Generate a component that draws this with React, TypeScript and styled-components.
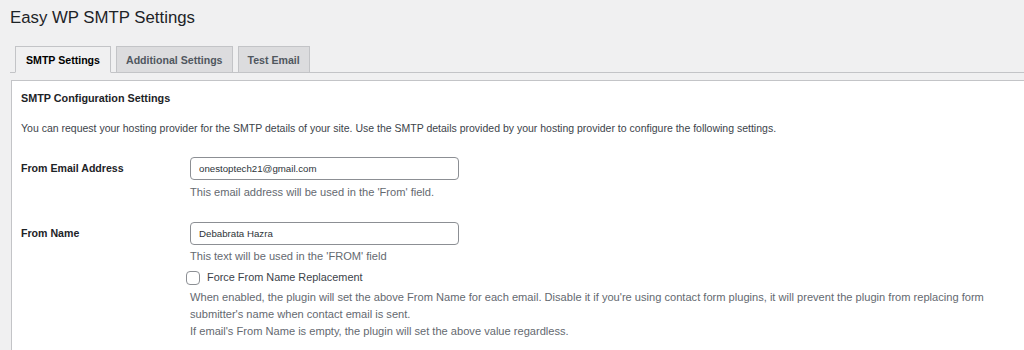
import React, { FC, useState } from "react";
import styled, { createGlobalStyle } from "styled-components";

const GlobalStyle = createGlobalStyle`
  html, body {
    margin: 0;
    padding: 0;
    background: #f0f0f1;
    overflow: hidden;
  }
  body {
    font-family: "Liberation Sans", Arial, sans-serif;
    color: #3c434a;
  }
`;

const Page = styled.div`
  width: 1024px;
  height: 350px;
  overflow: hidden;
  padding-left: 10px;
  box-sizing: border-box;
`;

const Heading = styled.h1`
  margin: 0;
  padding-top: 8px;
  font-size: 16.8px;
  font-weight: 400;
  line-height: 20px;
  color: #1d2327;
`;

const TabBar = styled.nav`
  display: flex;
  gap: 5px;
  margin-top: 18px;
  padding-left: 5px;
  border-bottom: 1px solid #c3c4c7;
  margin-right: -10px;
`;

const Tab = styled.button<{ $active?: boolean }>`
  height: 27px;
  padding: 0 ${p => (p.$active ? 10 : 9)}px;
  margin-bottom: -1px;
  border: 1px solid #c3c4c7;
  border-bottom-color: ${p => (p.$active ? "#f0f0f1" : "#c3c4c7")};
  background: ${p => (p.$active ? "#f0f0f1" : "#dcdcde")};
  color: ${p => (p.$active ? "#000" : "#50575e")};
  font-family: inherit;
  font-size: 10.6px;
  font-weight: 700;
  cursor: pointer;
`;

const Panel = styled.section`
  margin-top: 7px;
  margin-left: 1px;
  margin-right: -20px;
  background: #fff;
  border: 1px solid #c3c4c7;
  padding: 10px 10px 30px 9px;
  height: 400px;
`;

const PanelTitle = styled.h3`
  margin: 0;
  font-size: 10.8px;
  font-weight: 700;
  line-height: 14px;
  color: #1d2327;
`;

const Intro = styled.p`
  margin: 16px 0 0;
  font-size: 10.5px;
  line-height: 14px;
`;

const FieldRow = styled.div<{ $top: number }>`
  display: grid;
  grid-template-columns: 169px 1fr;
  margin-top: ${p => p.$top}px;
`;

const Label = styled.label`
  font-size: 10.6px;
  font-weight: 700;
  line-height: 22px;
  color: #1d2327;
`;

const Field = styled.div`
  display: flex;
  flex-direction: column;
  align-items: flex-start;
`;

const TextInput = styled.input`
  width: 269px;
  height: 23px;
  box-sizing: border-box;
  border: 1px solid #8c8f94;
  border-radius: 4px;
  padding: 0 8px;
  font-family: inherit;
  font-size: 9.7px;
  color: #2c3338;
  background: #fff;
  outline: none;
`;

const Description = styled.p<{ $gap?: number }>`
  margin: ${p => p.$gap ?? 3}px 0 0;
  font-size: 11.1px;
  line-height: 17px;
  color: #646970;
`;

const CheckRow = styled.label`
  display: flex;
  align-items: center;
  gap: 7px;
  margin-top: 4px;
  margin-left: -4px;
  font-size: 10.9px;
  line-height: 17px;
  color: #3c434a;
`;

const CheckBox = styled.input`
  appearance: none;
  width: 14px;
  height: 14px;
  margin: 0;
  border: 1px solid #8c8f94;
  border-radius: 4px;
  background: #fff;
`;

const LongDescription = styled(Description)`
  max-width: 820px;
`;

const App: FC = () => {
  const [email, setEmail] = useState("onestoptech21@gmail.com");
  const [name, setName] = useState("Debabrata Hazra");
  const [forceName, setForceName] = useState(false);

  return (
    <Page>
      <GlobalStyle />
      <Heading>Easy WP SMTP Settings</Heading>
      <TabBar>
        <Tab $active>SMTP Settings</Tab>
        <Tab>Additional Settings</Tab>
        <Tab>Test Email</Tab>
      </TabBar>
      <Panel>
        <PanelTitle>SMTP Configuration Settings</PanelTitle>
        <Intro>
          You can request your hosting provider for the SMTP details of your
          site. Use the SMTP details provided by your hosting provider to
          configure the following settings.
        </Intro>
        <FieldRow $top={22}>
          <Label>From Email Address</Label>
          <Field>
            <TextInput value={email} onChange={e => setEmail(e.target.value)} />
            <Description $gap={4}>
              This email address will be used in the 'From' field.
            </Description>
          </Field>
        </FieldRow>
        <FieldRow $top={21}>
          <Label>From Name</Label>
          <Field>
            <TextInput value={name} onChange={e => setName(e.target.value)} />
            <Description>This text will be used in the 'FROM' field</Description>
            <CheckRow>
              <CheckBox
                type="checkbox"
                checked={forceName}
                onChange={e => setForceName(e.target.checked)}
              />
              Force From Name Replacement
            </CheckRow>
            <LongDescription>
              When enabled, the plugin will set the above From Name for each
              email. Disable it if you're using contact form plugins, it will
              prevent the plugin from replacing form submitter's name when
              contact email is sent.
              <br />
              If email's From Name is empty, the plugin will set the above value
              regardless.
            </LongDescription>
          </Field>
        </FieldRow>
      </Panel>
    </Page>
  );
};

export default App;
